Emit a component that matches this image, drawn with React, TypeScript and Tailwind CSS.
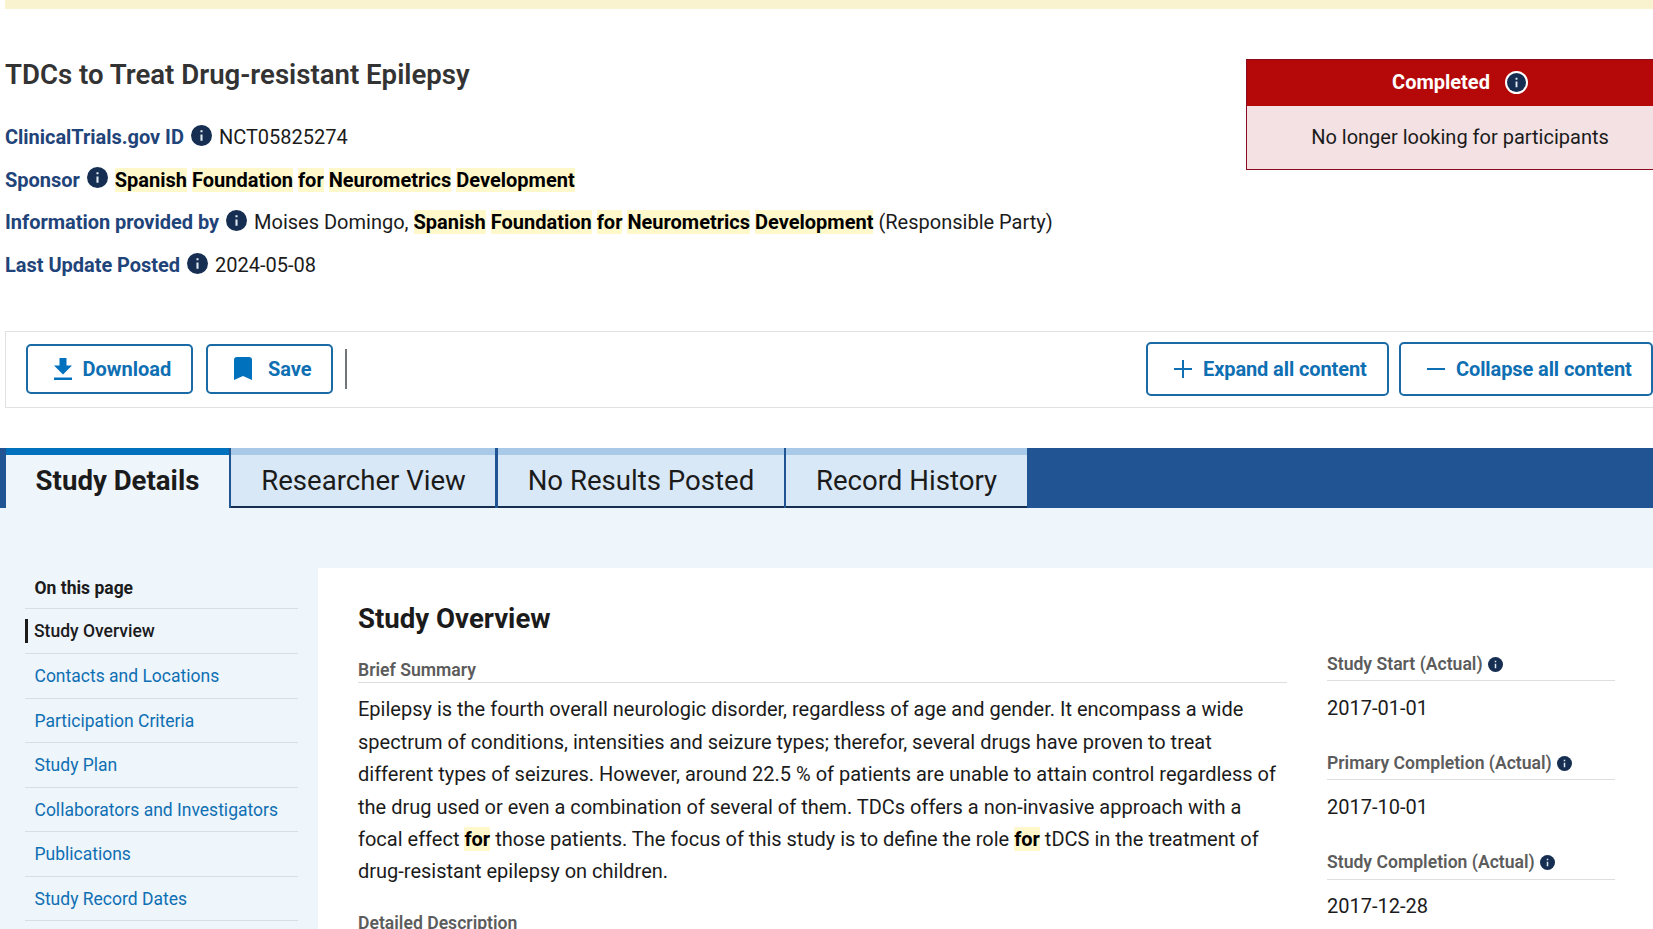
import clsx from "clsx";

function InfoIcon({ className }: { className?: string }) {
  return (
    <svg viewBox="0 0 20 20" className={clsx("shrink-0", className)}>
      <circle cx="10" cy="10" r="10" fill="#162e51" />
      <path d="M9 5h2v2H9zM9 9h2v6H9z" fill="#dfe9f3" />
    </svg>
  );
}

function Mark({ text }: { text: string }) {
  const words = text.split(" ");
  return (
    <>
      {words.map((word, i) => (
        <span key={i}>
          <mark className="bg-[#fff8ca] font-bold text-black">{word}</mark>
          {i < words.length - 1 && " "}
        </span>
      ))}
    </>
  );
}

const sponsor = "Spanish Foundation for Neurometrics Development";

const facts = [
  { label: "ClinicalTrials.gov ID", value: "NCT05825274" },
  { label: "Sponsor", value: <Mark text={sponsor} /> },
  {
    label: "Information provided by",
    value: (
      <>
        Moises Domingo, <Mark text={sponsor} /> (Responsible Party)
      </>
    ),
  },
  { label: "Last Update Posted", value: "2024-05-08" },
];

const tabs = [
  { label: "Researcher View", className: "w-[264px] pl-px" },
  { label: "No Results Posted", className: "ml-[3px] w-[286px]" },
  { label: "Record History", className: "ml-[2px] w-[241px]" },
];

const links = [
  "Contacts and Locations",
  "Participation Criteria",
  "Study Plan",
  "Collaborators and Investigators",
  "Publications",
  "Study Record Dates",
];

const dates = [
  { label: "Study Start (Actual)", value: "2017-01-01" },
  { label: "Primary Completion (Actual)", value: "2017-10-01" },
  { label: "Study Completion (Actual)", value: "2017-12-28" },
];

const button =
  "flex items-center rounded-[5px] border-2 border-[#1a6ba5] bg-white font-bold text-[#0f6fb3]";

export default function App() {
  return (
    <div className="h-[929px] w-[1653px] overflow-hidden bg-white font-['Roboto',sans-serif] text-[20px] text-[#1b1b1b]">
      <div className="ml-[5px] h-[9px] bg-[#f9f3d0]" />

      <header className="flex h-[322px] justify-between pl-[5px]">
        <div className="pt-[46px]">
          <h1 className="text-[27.6px] leading-[40px] font-semibold text-[#333]">
            TDCs to Treat Drug-resistant Epilepsy
          </h1>
          <dl className="mt-[21px]">
            {facts.map((fact) => (
              <div key={fact.label} className="flex h-[42.6px] items-center whitespace-nowrap">
                <dt className="flex items-center font-bold tracking-[-0.03px] text-[#1f4479]">
                  {fact.label}
                  <InfoIcon className="relative -top-[2px] mx-[7px] size-[21px]" />
                </dt>
                <dd>{fact.value}</dd>
              </div>
            ))}
          </dl>
        </div>

        <div className="mt-[50px] -mr-[21px] h-[111px] w-[428px] shrink-0 border border-[#8b0a1e] bg-[#f3e1e4] text-center">
          <div className="flex h-[46px] items-center justify-center bg-[#b50909] pb-[2px] font-bold text-white">
            Completed
            <span className="ml-[15px] rounded-full bg-white p-[2px]">
              <InfoIcon className="size-[19px]" />
            </span>
          </div>
          <p className="leading-[63px]">No longer looking for participants</p>
        </div>
      </header>

      <div className="-mr-5 ml-[5px] flex h-[77px] items-center border border-[#dfe1e2] pb-[2px] pl-5">
        <button className={clsx(button, "h-[50px] w-[167px] pl-[26px]")}>
          <svg viewBox="0 0 18 22" className="mr-[10.5px] h-[22px] w-[18px]" fill="#0071bc">
            <path d="M5.5 0h7v7.5H18L9 16.5 0 7.5h5.5zM0 19.5h18V22H0z" />
          </svg>
          Download
        </button>
        <button className={clsx(button, "ml-[13px] h-[50px] w-[127px] pl-[26px]")}>
          <svg viewBox="0 0 18 23" className="mr-4 h-[23px] w-[18px]" fill="#0071bc">
            <path d="M3 0h12a3 3 0 0 1 3 3v20l-9-4-9 4V3a3 3 0 0 1 3-3z" />
          </svg>
          Save
        </button>
        <div className="ml-3 h-10 w-[2px] bg-[#71767a]" />
        <button className={clsx(button, "ml-[799px] h-[54px] w-[243px] shrink-0 pl-[26px] tracking-[-0.1px]")}>
          <svg viewBox="0 0 18 18" className="mr-[11px] size-[18px]" fill="#0f6fb3">
            <path d="M8 0h2v8h8v2h-8v8H8v-8H0V8h8z" />
          </svg>
          Expand all content
        </button>
        <button className={clsx(button, "ml-[10px] h-[54px] w-[254px] shrink-0 pl-[26px] tracking-[-0.1px]")}>
          <svg viewBox="0 0 18 18" className="mr-[11px] size-[18px]" fill="#0f6fb3">
            <path d="M0 8h18v2H0z" />
          </svg>
          Collapse all content
        </button>
      </div>

      <nav className="mt-10 flex h-[60px] bg-[#205493] pl-[6px] text-[27.6px]">
        <div className="mr-[2px] flex w-[223px] items-center justify-center border-t-[7px] border-[#0071bc] bg-[#eef5fb] pb-[2px] font-bold">
          Study Details
        </div>
        {tabs.map((tab) => (
          <div
            key={tab.label}
            className={clsx(
              "flex items-center justify-center border-t-[7px] border-b-2 border-t-[#a9c9e8] border-b-[#162e51] bg-[#d9e8f6]",
              tab.className
            )}
          >
            {tab.label}
          </div>
        ))}
      </nav>

      <main className="flex h-[421px] bg-[#eef5fb] pt-[60px]">
        <aside className="ml-[25px] w-[273px] text-[17.5px]">
          <div className="h-[41px] border-b border-[#d6dfe6] pl-[9.5px] leading-[40px] font-bold">On this page</div>
          <div className="flex h-[45px] items-center border-b border-[#d6dfe6]">
            <div className="h-6 border-l-[3px] border-[#1b1b1b] pl-[6px] leading-6 font-medium">Study Overview</div>
          </div>
          {links.map((link) => (
            <a
              key={link}
              className="block h-[44.5px] border-b border-[#d6dfe6] pl-[9.5px] leading-[44px] text-[#0f6fb3]"
            >
              {link}
            </a>
          ))}
        </aside>

        <section className="ml-5 flex grow bg-white pl-10">
          <div className="w-[929px] shrink-0 pt-[31px]">
            <h2 className="text-[27.6px] leading-[40px] font-bold">Study Overview</h2>
            <h3 className="mt-[17px] h-[27px] border-b border-[#dcdee0] text-[17.6px] leading-[29px] font-semibold text-[#5c5c5c]">
              Brief Summary
            </h3>
            <p className="mt-[10.4px] leading-[32.4px] whitespace-nowrap">
              Epilepsy is the fourth overall neurologic disorder, regardless of age and gender. It encompass a wide
              <br />
              spectrum of conditions, intensities and seizure types; therefor, several drugs have proven to treat
              <br />
              different types of seizures. However, around 22.5 % of patients are unable to attain control regardless of
              <br />
              the drug used or even a combination of several of them. TDCs offers a non-invasive approach with a
              <br />
              focal effect <Mark text="for" /> those patients. The focus of this study is to define the role{" "}
              <Mark text="for" /> tDCS in the treatment of
              <br />
              drug-resistant epilepsy on children.
            </p>
            <h3 className="mt-[21.6px] text-[17.6px] leading-[29px] font-semibold text-[#5c5c5c]">
              Detailed Description
            </h3>
          </div>

          <dl className="ml-10 w-[288px] shrink-0 pt-[80px]">
            {dates.map((date) => (
              <div key={date.label} className="h-[99.3px]">
                <dt className="flex h-[33px] items-center border-b border-[#dcdee0] text-[17.6px] font-semibold text-[#5c5c5c]">
                  {date.label}
                  <InfoIcon className="ml-[5px] size-[15px]" />
                </dt>
                <dd className="pt-[10.5px] leading-[32px]">{date.value}</dd>
              </div>
            ))}
          </dl>
        </section>
      </main>
    </div>
  );
}
